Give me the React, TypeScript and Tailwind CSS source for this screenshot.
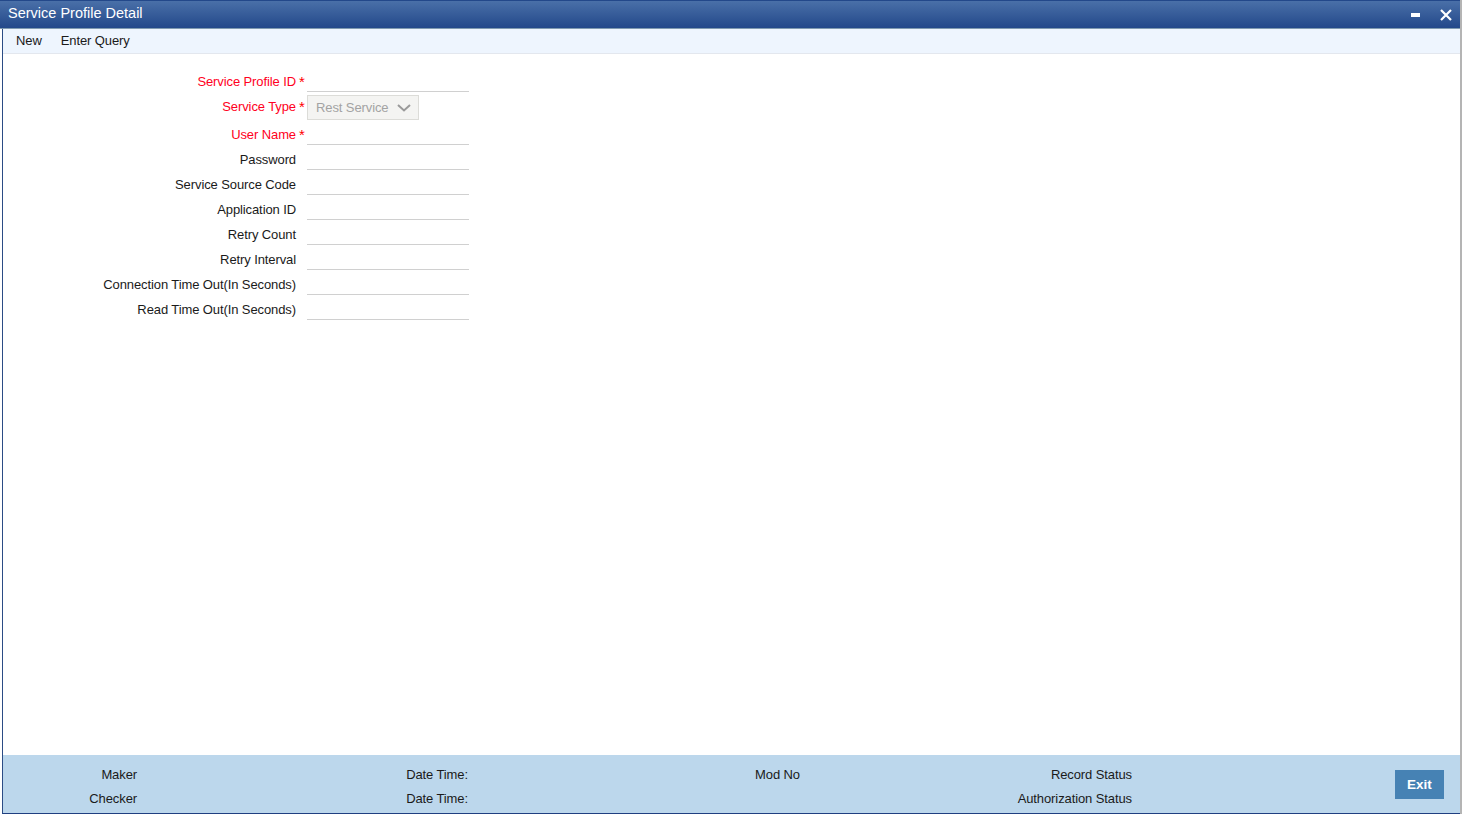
import React from 'react';

const fields = [
  { label: 'Service Profile ID', required: true },
  { label: 'Service Type', required: true, select: true },
  { label: 'User Name', required: true },
  { label: 'Password' },
  { label: 'Service Source Code' },
  { label: 'Application ID' },
  { label: 'Retry Count' },
  { label: 'Retry Interval' },
  { label: 'Connection Time Out(In Seconds)' },
  { label: 'Read Time Out(In Seconds)' },
];

function FormRow({ label, required, select }: { label: string; required?: boolean; select?: boolean }) {
  return (
    <div className={select ? 'flex h-[28px] items-center' : 'flex h-[25px] items-stretch'}>
      <label
        className={`w-[293px] text-right leading-[25px] ${required ? 'text-[#ff0022]' : 'text-[#1a1a1a]'} ${select ? 'mt-[1px]' : 'pt-[2px]'}`}
      >
        {label}
      </label>
      <span className={`w-[11px] pl-[3px] text-[15px] leading-[25px] text-[#ff0000] ${select ? 'mt-[1px]' : 'pt-[2px]'}`}>{required ? '*' : ''}</span>
      {select ? (
        <div className="mt-[3px] flex h-[25px] w-[112px] items-center justify-between border border-[#dcdcd8] bg-[#f4f4f2] pl-[8px] pr-[7px] text-[#a3a3a3]">
          <span>Rest Service</span>
          <svg width="14" height="8" viewBox="0 0 14 8" fill="none" stroke="#9a9a9a" strokeWidth="2">
            <path d="M1 1l6 5.5L13 1" />
          </svg>
        </div>
      ) : (
        <input className="h-[25px] w-[162px] border-0 border-b border-[#d0d0d0] bg-white outline-none" />
      )}
    </div>
  );
}

export default function App() {
  return (
    <div className="flex h-[816px] w-[1462px] flex-col overflow-hidden bg-white font-['Liberation_Sans',Arial,sans-serif] text-[13px] tracking-[-0.1px]">
      <div className="flex h-[814px] flex-col border-r-2 border-r-[#b4b4b4]">
        {/* Title bar */}
        <div className="flex h-[29px] shrink-0 items-center justify-between border-t border-b border-t-[#23488a] border-b-[#7f9ab0] bg-gradient-to-b from-[#4a70a8] to-[#23488a] pl-[8px] text-[14.5px] tracking-normal text-white">
          <span className="-mt-[2px]">Service Profile Detail</span>
          <div className="flex items-center">
            <svg width="9" height="4" viewBox="0 0 9 4" className="mr-[20px]">
              <rect width="9" height="4" fill="#fff" />
            </svg>
            <svg width="12" height="12" viewBox="0 0 12 12" className="mr-[8px]" stroke="#fff" strokeWidth="2.2">
              <path d="M1 1l10 10M11 1L1 11" />
            </svg>
          </div>
        </div>

        <div className="ml-[2px] flex min-h-0 flex-1 flex-col border-b border-l border-b-[#1f3f80] border-l-[#2b4c85]">
          {/* Toolbar */}
          <div className="flex h-[25px] shrink-0 items-center gap-[19px] border-b border-[#e3e7ee] bg-[#eef5fe] pl-[13px] text-[#1a1a1a]">
            <span>New</span>
            <span>Enter Query</span>
          </div>

          {/* Form */}
          <div className="flex-1 pt-[13px]">
            {fields.map((f) => (
              <FormRow key={f.label} {...f} />
            ))}
          </div>

          {/* Footer */}
          <div className="flex h-[58px] shrink-0 items-start bg-[#bcd7ec] pt-[8px] text-[#1a1a1a]">
            <div className="w-[134px] text-right leading-[24px]">
              <div>Maker</div>
              <div>Checker</div>
            </div>
            <div className="w-[331px] text-right leading-[24px]">
              <div>Date Time:</div>
              <div>Date Time:</div>
            </div>
            <div className="w-[332px] text-right leading-[24px]">
              <div>Mod No</div>
            </div>
            <div className="w-[332px] text-right leading-[24px]">
              <div>Record Status</div>
              <div>Authorization Status</div>
            </div>
            <button className="ml-[263px] mt-[7px] h-[29px] w-[49px] bg-[#4682b4] pt-[1px] text-[13.5px] font-bold tracking-normal text-white">Exit</button>
          </div>
        </div>
      </div>
    </div>
  );
}
